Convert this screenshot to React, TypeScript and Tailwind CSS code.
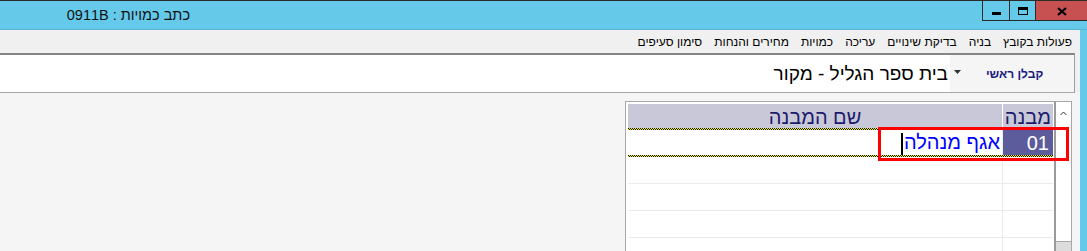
const font = "font-['Liberation_Sans','DejaVu_Sans',Arial,sans-serif]";

const menuItems = [
    "פעולות בקובץ",
    "בניה",
    "בדיקת שינויים",
    "עריכה",
    "כמויות",
    "מחירים והנחות",
    "סימון סעיפים",
];

function Dotted() {
    return (
        <div className="shrink-0 flex flex-col">
            <div className="h-px bg-[linear-gradient(90deg,#000_50%,#ffff00_50%)] bg-[length:2px_1px]" />
            <div className="h-px bg-[linear-gradient(90deg,#ffff00_50%,#000_50%)] bg-[length:2px_1px]" />
        </div>
    );
}

function TitleBar() {
    return (
        <div className="h-[30px] shrink-0 flex items-start border-t border-[#2b2b2b] border-b border-b-[#58b4d4] bg-[#65c9ea]">
            <div dir="rtl" className="w-[190px] shrink-0 text-right text-[14.5px] text-[#111] leading-[28px]">
                כתב כמויות : 0911B
            </div>
            <div className="flex-1" />
            <div className="flex h-[20px]">
                <div className="w-[28px] flex items-center justify-center border-l border-r border-b border-[#2b2b2b]">
                    <div className="w-[9px] h-[3px] mt-[5px] bg-black" />
                </div>
                <div className="w-[26px] flex items-center justify-center border-r border-b border-[#2b2b2b]">
                    <div className="w-[10px] h-[8px] border border-t-[3px] border-black mt-[1px]" />
                </div>
                <div className="w-[51px] flex items-center justify-center border-b border-[#2b2b2b] bg-[#c75050]">
                    <svg width="10" height="9" viewBox="0 0 10 9" className="mt-[1px]">
                        <path d="M1 1 L9 8 M9 1 L1 8" stroke="#000" strokeWidth="2.2" />
                    </svg>
                </div>
            </div>
        </div>
    );
}

function MenuBar() {
    return (
        <div dir="rtl" className="h-[23px] shrink-0 flex items-center bg-[#f0f0f0] pr-[2px] text-[12px] text-black">
            {menuItems.map(item => (
                <span key={item} className="px-[6px] leading-[22px]">{item}</span>
            ))}
        </div>
    );
}

function Toolbar() {
    return (
        <div className="h-[40px] shrink-0 flex bg-[#f0f0f0] pr-[5px]">
            <div className="flex-1 flex border-t-2 border-[#858585] border-r border-r-[#a0a0a0] border-b border-b-[#a8a8a8]">
                <div className="flex-1 bg-white flex items-center justify-end pr-[2px]">
                    <span dir="rtl" className="text-[19px] text-black leading-none">בית ספר הגליל - מקור</span>
                </div>
                <div className="w-[124px] bg-[#f5f5f5] flex items-center">
                    <svg width="7" height="4" viewBox="0 0 7 4" className="ml-[4px] mt-[-3px]">
                        <path d="M0 0 L7 0 L3.5 4 Z" fill="#333" />
                    </svg>
                    <span dir="rtl" className="ml-[25px] text-[12px] font-bold text-[#1a1a80] leading-none">קבלן ראשי</span>
                </div>
            </div>
        </div>
    );
}

function Grid() {
    const rows = [0, 1, 2, 3];
    return (
        <div className="w-[431px] border-t border-l border-[#a8a8a8] border-r-2 border-r-[#9a9a9a] bg-white pt-[2px] pl-[2px] pr-[1px] flex flex-col">
            <div className="h-[24px] shrink-0 flex bg-[#c8c8d8] text-[20px] text-[#1c1c6e]">
                <div dir="rtl" className="flex-1 text-center leading-[27px]">שם המבנה</div>
                <div className="w-px bg-white" />
                <div dir="rtl" className="w-[50px] text-right pr-[2px] leading-[27px]">מבנה</div>
            </div>
            <div className="h-[29px] shrink-0 flex flex-col">
                <Dotted />
                <div className="h-[25px] shrink-0 flex">
                    <div dir="rtl" className="flex-1 flex items-end justify-start pr-[2px] text-[20px] text-[#0000ff]">
                        <span className="leading-[25px]">אגף מנהלה</span>
                        <span className="inline-block w-[2px] h-[22px] bg-black mr-[1px]" />
                    </div>
                    <div className="w-px bg-[#ebebeb]" />
                    <div className="w-[50px] bg-[#5c5c9c] text-white text-[20px] text-right pr-[4px] leading-[26px]">01</div>
                </div>
                <Dotted />
            </div>
            {rows.map(r => (
                <div key={r} className="h-[27px] shrink-0 flex border-b border-[#ebebeb]">
                    <div className="flex-1" />
                    <div className="w-px bg-[#ebebeb]" />
                    <div className="w-[50px]" />
                </div>
            ))}
        </div>
    );
}

function ScrollBar() {
    return (
        <div className="w-[16px] border-t border-r border-[#a8a8a8] bg-white flex flex-col">
            <div className="h-[18px] flex items-center justify-center">
                <svg width="7" height="5" viewBox="0 0 7 5" className="mt-[4px]">
                    <path d="M0.5 4 L3.5 1 L6.5 4" stroke="#333" strokeWidth="1" fill="none" />
                </svg>
            </div>
            <div className="h-[121px]" />
            <div className="flex-1 bg-[#dcdcdc] border-t border-[#a8a8a8]" />
        </div>
    );
}

export default function App() {
    return (
        <div className={`relative w-[1087px] h-[251px] overflow-hidden bg-[#65c9ea] flex flex-col ${font}`}>
            <TitleBar />
            <div className="flex-1 w-[1080px] flex flex-col bg-[#f5f5f5] overflow-hidden">
                <MenuBar />
                <Toolbar />
                <div className="flex-1 flex justify-end pt-[8px] pr-[8px] bg-[#f5f5f5]">
                    <Grid />
                    <ScrollBar />
                </div>
            </div>
            <div className="absolute left-[878px] top-[127px] w-[191px] h-[34px] border-[3px] border-[#ff0000]" />
        </div>
    );
}
